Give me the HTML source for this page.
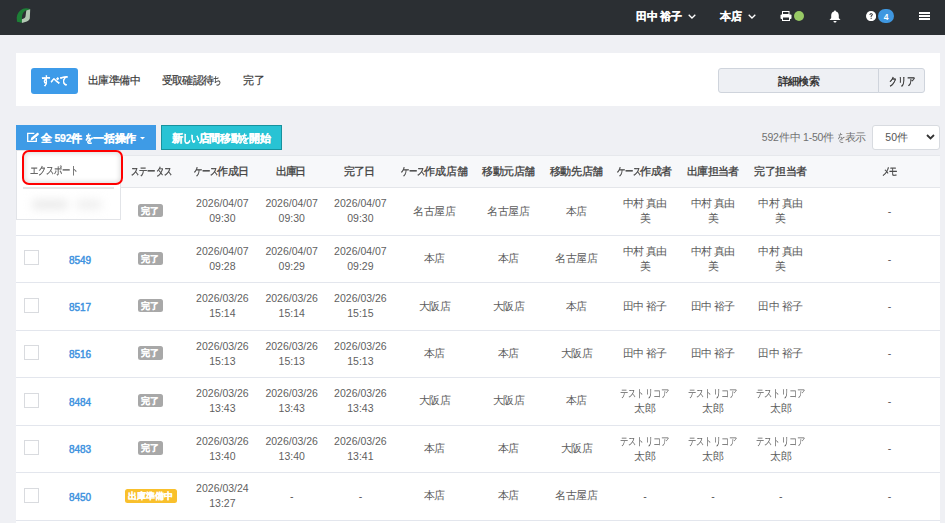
<!DOCTYPE html>
<html><head><meta charset="utf-8">
<style>
*{box-sizing:border-box;margin:0;padding:0}
html,body{width:945px;height:523px;overflow:hidden}
body{background:#eff0f4;font-family:"Liberation Sans",sans-serif;font-size:10.5px;color:#555;position:relative}
.abs{position:absolute}
.tx{position:absolute;white-space:nowrap;line-height:16px;height:16px}
.tn{-webkit-text-stroke:0.2px currentColor}
.tb{-webkit-text-stroke:0.2px currentColor}
.tid{-webkit-text-stroke:0.45px currentColor}
.k{display:inline-block;letter-spacing:0;white-space:nowrap}
.ki{display:inline-block;transform-origin:0 0;letter-spacing:0}
.card{position:absolute;background:#fff}
.row{position:absolute;left:16px;width:924px;border-bottom:1px solid #e3e6ed;background:#fff}
.cb{position:absolute;left:24px;width:14.6px;height:15px;border:1px solid #d9dbdf;background:#fff}
.bdg{position:absolute;background:#a8a8a8;border-radius:2.5px}
</style></head>
<body>
<div class="abs" style="left:0;top:0;width:945px;height:35px;background:#2b2f33"></div>
<svg class="abs" style="left:12px;top:4px" width="24" height="24" viewBox="0 0 24 24">
  <path d="M18.1 5.1 C16 4 13 3.8 11 4.8 C7.5 6.5 5 9.5 4.7 13.5 L5 17.8 L9.9 18.7 L9.9 13.4 C10 10.2 11.6 7.3 13.9 6.5 L18.1 5.4 Z" fill="#1d7f36"/>
  <path d="M14.3 6.4 L18.2 5.2 L17.8 14.6 C17.2 16.4 15.6 17.4 13.2 18.1 L9.9 18.9 L9.9 15.2 C11.6 14.6 13.2 13.9 13.5 12.4 Z" fill="#b3c9b4"/>
</svg>
<svg class="abs" style="left:688px;top:14px" width="8" height="5" viewBox="0 0 8 5"><path d="M0.7 0.7 L4 4 L7.3 0.7" stroke="#fff" stroke-width="1.3" fill="none"/></svg>
<svg class="abs" style="left:748px;top:14px" width="8" height="5" viewBox="0 0 8 5"><path d="M0.7 0.7 L4 4 L7.3 0.7" stroke="#fff" stroke-width="1.3" fill="none"/></svg>
<!-- printer -->
<svg class="abs" style="left:780px;top:11px" width="12" height="10" viewBox="0 0 12 10">
  <rect x="2.5" y="0.5" width="6.5" height="3" fill="none" stroke="#fff" stroke-width="1"/>
  <rect x="0.5" y="3.5" width="11" height="4.5" rx="1" fill="#fff"/>
  <rect x="2.5" y="6" width="7" height="3.5" fill="#2b2f33" stroke="#fff" stroke-width="1"/>
</svg>
<div class="abs" style="left:794.2px;top:10.8px;width:10.2px;height:10.2px;border-radius:50%;background:#97c965"></div>
<!-- bell -->
<svg class="abs" style="left:829px;top:10px" width="12" height="13" viewBox="0 0 12 13">
  <path d="M6 0.5 C6.6 0.5 7 1 7 1.5 C9 2 9.8 3.6 9.8 5.6 L9.8 8 L11.5 10 L0.5 10 L2.2 8 L2.2 5.6 C2.2 3.6 3 2 5 1.5 C5 1 5.4 0.5 6 0.5Z" fill="#fff"/>
  <path d="M4.5 11 L7.5 11 C7.5 12 6.8 12.6 6 12.6 C5.2 12.6 4.5 12 4.5 11Z" fill="#fff"/>
</svg>
<!-- question -->
<svg class="abs" style="left:866px;top:11px" width="10.2" height="10.2" viewBox="0 0 11 11">
  <circle cx="5.5" cy="5.5" r="5.5" fill="#fff"/>
  <path d="M3.7 4.2 C3.7 3 4.5 2.3 5.6 2.3 C6.7 2.3 7.4 3 7.4 3.9 C7.4 5 6.2 5.2 6 6.2 L6 6.6 L5 6.6 L5 6 C5.1 4.8 6.3 4.7 6.3 3.9 C6.3 3.5 6 3.2 5.6 3.2 C5.1 3.2 4.8 3.6 4.8 4.2Z" fill="#2b2f33"/>
  <rect x="5" y="7.3" width="1.1" height="1.2" fill="#2b2f33"/>
</svg>
<div class="abs" style="left:878px;top:9px;width:16px;height:14px;border-radius:7px;background:#3f97e0;color:#fff;font-weight:bold;font-size:8.5px;line-height:16px;text-align:center">4</div>
<!-- hamburger -->
<div class="abs" style="left:919px;top:12px;width:10.8px;height:1.9px;background:#fff"></div>
<div class="abs" style="left:919px;top:15.2px;width:10.8px;height:1.9px;background:#fff"></div>
<div class="abs" style="left:919px;top:18.4px;width:10.8px;height:1.9px;background:#fff"></div>

<!-- tabs card -->
<div class="card" style="left:16px;top:53px;width:924px;height:53px"></div>
<div class="abs" style="left:31px;top:68px;width:47px;height:26px;background:#3d9be9;border-radius:3px"></div>
<div class="abs" style="left:718px;top:68px;width:161px;height:25px;background:#eef0f4;border:1px solid #cfd4dc;border-radius:3px 0 0 3px"></div>
<div class="abs" style="left:878px;top:68px;width:47px;height:25px;background:#eef0f4;border:1px solid #cfd4dc;border-radius:0 3px 3px 0"></div>

<!-- action buttons -->
<div class="abs" style="left:16px;top:125px;width:140px;height:25px;background:#3e9be6"></div>
<svg class="abs" style="left:26px;top:132.2px" width="14" height="11" viewBox="0 0 14 11">
  <path d="M8.3 1.3 L1.7 1.3 L1.7 9.3 L10.3 9.3 L10.3 6" fill="none" stroke="#fff" stroke-width="1.3"/>
  <path d="M4.6 8.6 L5.2 5.8 L11 1.0 C11.5 0.6 12.1 0.7 12.5 1.2 L12.7 1.5 C13 2 12.9 2.6 12.5 3 L6.8 7.8 Z" fill="#fff"/>
</svg>
<svg class="abs" style="left:139.5px;top:137px" width="5" height="3" viewBox="0 0 5 3"><path d="M0 0 L5 0 L2.5 2.5Z" fill="#fff"/></svg>
<div class="abs" style="left:161px;top:125px;width:121px;height:25px;background:#28c3d4;border:1px solid #17929e"></div>

<div class="abs" style="left:871.5px;top:125px;width:68.5px;height:25px;background:#fff;border:1px solid #d8dbe0;border-radius:3px"></div>
<svg class="abs" style="left:926px;top:134px" width="9" height="6" viewBox="0 0 9 6"><path d="M1 1 L4.5 4.5 L8 1" stroke="#333" stroke-width="1.8" fill="none"/></svg>

<!-- table -->
<div class="card" style="left:16px;top:155px;width:924px;height:368px"></div>
<div class="abs" style="left:16px;top:155px;width:924px;height:32.6px;background:#f7f8fa;border-top:1px solid #e6e8ec;border-bottom:1px solid #e4e6ea"></div>
<div class="row" style="top:188.30px;height:47.48px"></div>
<div class="bdg" style="left:138px;width:25px;top:204.04px;height:13.2px"></div>
<div class="row" style="top:235.78px;height:47.48px"></div>
<div class="cb" style="top:250.12px"></div>
<div class="bdg" style="left:138px;width:25px;top:251.52px;height:13.2px"></div>
<div class="row" style="top:283.26px;height:47.48px"></div>
<div class="cb" style="top:297.60px"></div>
<div class="bdg" style="left:138px;width:25px;top:299.00px;height:13.2px"></div>
<div class="row" style="top:330.74px;height:47.48px"></div>
<div class="cb" style="top:345.08px"></div>
<div class="bdg" style="left:138px;width:25px;top:346.48px;height:13.2px"></div>
<div class="row" style="top:378.22px;height:47.48px"></div>
<div class="cb" style="top:392.56px"></div>
<div class="bdg" style="left:138px;width:25px;top:393.96px;height:13.2px"></div>
<div class="row" style="top:425.70px;height:47.48px"></div>
<div class="cb" style="top:440.04px"></div>
<div class="bdg" style="left:138px;width:25px;top:441.44px;height:13.2px"></div>
<div class="row" style="top:473.18px;height:47.48px"></div>
<div class="cb" style="top:487.52px"></div>
<div class="bdg" style="left:125px;width:52px;top:489.32px;height:14px;background:#f9c02c"></div>

<!-- dropdown -->
<div class="abs" style="left:16px;top:150px;width:105px;height:70px;background:#fff;border:1px solid #e2e4e8"></div>
<div class="abs" style="left:23px;top:187px;width:91px;height:2px;background:#e6e6e6"></div>
<div class="abs" style="left:20px;top:190px;width:96px;height:30px;filter:blur(5px)">
  <div style="position:absolute;left:12px;top:10px;width:36px;height:9px;background:#e9e9e9;border-radius:4px"></div>
  <div style="position:absolute;left:56px;top:10px;width:26px;height:9px;background:#eeeeee;border-radius:4px"></div>
</div>
<div class="abs" style="left:22px;top:150px;width:101px;height:35px;border:2px solid #f00;border-radius:7px;box-shadow:inset 0 0 5px 1px rgba(0,0,0,0.15);background:#fff"></div>
<div class="tx tb" style="left:636.10px;top:8.30px;font-size:10.5px;font-weight:bold;color:#fff;letter-spacing:-0.31px;">田中 裕子</div>
<div class="tx tb" style="left:720.40px;top:8.30px;font-size:10.5px;font-weight:bold;color:#fff;letter-spacing:-0.70px;">本店</div>
<div class="tx tb" style="left:41.50px;top:72.00px;font-size:10.5px;font-weight:bold;color:#fff;letter-spacing:0.45px;"><span class="k" style="width:25.29px"><span class="ki" style="transform:scaleX(0.76);letter-spacing:0.59px">すべて</span></span></div>
<div class="tx tn" style="left:88.00px;top:72.00px;font-size:10.5px;font-weight:normal;color:#3a3a3a;letter-spacing:-0.62px;">出庫準備中</div>
<div class="tx tn" style="left:161.50px;top:72.00px;font-size:10.5px;font-weight:normal;color:#3a3a3a;letter-spacing:-0.65px;">受取確認待<span class="k" style="width:7.33px"><span class="ki" style="transform:scaleX(0.76);letter-spacing:-0.85px">ち</span></span></div>
<div class="tx tn" style="left:243.00px;top:72.00px;font-size:10.5px;font-weight:normal;color:#3a3a3a;letter-spacing:-0.50px;">完了</div>
<div class="tx tn" style="left:777.50px;top:73.00px;font-size:10.5px;font-weight:normal;color:#2a2a2a;letter-spacing:-0.53px;-webkit-text-stroke:0.35px #2a2a2a;">詳細検索</div>
<div class="tx tn" style="left:888.50px;top:73.00px;font-size:10.5px;font-weight:normal;color:#2a2a2a;letter-spacing:0.40px;-webkit-text-stroke:0.35px #2a2a2a;"><span class="k" style="width:25.14px"><span class="ki" style="transform:scaleX(0.76);letter-spacing:0.53px">クリア</span></span></div>
<div class="tx tb" style="left:40.80px;top:129.60px;font-size:10.5px;font-weight:bold;color:#fff;letter-spacing:-0.16px;">全 592件 <span class="k" style="width:7.82px"><span class="ki" style="transform:scaleX(0.76);letter-spacing:-0.21px">を</span></span>一括操作</div>
<div class="tx tb" style="left:172.40px;top:130.20px;font-size:10.5px;font-weight:bold;color:#fff;letter-spacing:-0.27px;">新<span class="k" style="width:15.42px"><span class="ki" style="transform:scaleX(0.76);letter-spacing:-0.35px">しい</span></span>店間移動<span class="k" style="width:7.71px"><span class="ki" style="transform:scaleX(0.76);letter-spacing:-0.35px">を</span></span>開始</div>
<div class="tx tn" style="left:761.80px;top:128.70px;font-size:10.5px;font-weight:normal;color:#707070;letter-spacing:-0.20px;-webkit-text-stroke:0px;">592件中 1-50件 <span class="k" style="width:7.78px"><span class="ki" style="transform:scaleX(0.76);letter-spacing:-0.27px">を</span></span>表示</div>
<div class="tx tn" style="left:885.30px;top:129.00px;font-size:10.5px;font-weight:normal;color:#555;letter-spacing:0.01px;-webkit-text-stroke:0px;">50件</div>
<div class="tx tn" style="left:130.50px;top:162.50px;font-size:10.5px;font-weight:normal;color:#404040;letter-spacing:-0.19px;-webkit-text-stroke:0.3px #404040;"><span class="k" style="width:38.96px"><span class="ki" style="transform:scaleX(0.76);letter-spacing:-0.25px">ステータス</span></span></div>
<div class="tx tn" style="left:194.20px;top:162.50px;font-size:10.5px;font-weight:normal;color:#404040;letter-spacing:-0.35px;-webkit-text-stroke:0.3px #404040;"><span class="k" style="width:22.90px"><span class="ki" style="transform:scaleX(0.76);letter-spacing:-0.46px">ケース</span></span>作成日</div>
<div class="tx tn" style="left:275.90px;top:162.50px;font-size:10.5px;font-weight:normal;color:#404040;letter-spacing:-1.20px;-webkit-text-stroke:0.3px #404040;">出庫日</div>
<div class="tx tn" style="left:344.10px;top:162.50px;font-size:10.5px;font-weight:normal;color:#404040;letter-spacing:-0.90px;-webkit-text-stroke:0.3px #404040;">完了日</div>
<div class="tx tn" style="left:401.10px;top:162.50px;font-size:10.5px;font-weight:normal;color:#404040;letter-spacing:-0.24px;-webkit-text-stroke:0.3px #404040;"><span class="k" style="width:23.22px"><span class="ki" style="transform:scaleX(0.76);letter-spacing:-0.32px">ケース</span></span>作成店舗</div>
<div class="tx tn" style="left:482.40px;top:162.50px;font-size:10.5px;font-weight:normal;color:#404040;letter-spacing:-0.50px;-webkit-text-stroke:0.3px #404040;">移動元店舗</div>
<div class="tx tn" style="left:549.70px;top:162.50px;font-size:10.5px;font-weight:normal;color:#404040;letter-spacing:-0.38px;-webkit-text-stroke:0.3px #404040;">移動先店舗</div>
<div class="tx tn" style="left:617.10px;top:162.50px;font-size:10.5px;font-weight:normal;color:#404040;letter-spacing:-0.35px;-webkit-text-stroke:0.3px #404040;"><span class="k" style="width:22.90px"><span class="ki" style="transform:scaleX(0.76);letter-spacing:-0.46px">ケース</span></span>作成者</div>
<div class="tx tn" style="left:686.90px;top:162.50px;font-size:10.5px;font-weight:normal;color:#404040;letter-spacing:-0.65px;-webkit-text-stroke:0.3px #404040;">出庫担当者</div>
<div class="tx tn" style="left:754.30px;top:162.50px;font-size:10.5px;font-weight:normal;color:#404040;letter-spacing:-0.55px;-webkit-text-stroke:0.3px #404040;">完了担当者</div>
<div class="tx tn" style="left:881.50px;top:162.50px;font-size:10.5px;font-weight:normal;color:#404040;letter-spacing:-1.21px;-webkit-text-stroke:0.3px #404040;"><span class="k" style="width:13.53px"><span class="ki" style="transform:scaleX(0.76);letter-spacing:-1.60px">メモ</span></span></div>
<div class="tx tn" style="left:30.00px;top:162.00px;font-size:10.5px;font-weight:normal;color:#555;letter-spacing:-0.33px;"><span class="k" style="width:45.92px"><span class="ki" style="transform:scaleX(0.76);letter-spacing:-0.43px">エクスポート</span></span></div>
<div class="tx tb" style="left:141.40px;top:203.04px;font-size:8.8px;font-weight:bold;color:#fff;letter-spacing:0.10px;">完了</div>
<div class="tx" style="left:162.40px;width:120px;text-align:center;top:195.34px;font-size:10.5px;font-weight:normal;color:#5f5f5f">2026/04/07</div>
<div class="tx" style="left:162.40px;width:120px;text-align:center;top:210.34px;font-size:10.5px;font-weight:normal;color:#5f5f5f">09:30</div>
<div class="tx" style="left:231.70px;width:120px;text-align:center;top:195.34px;font-size:10.5px;font-weight:normal;color:#5f5f5f">2026/04/07</div>
<div class="tx" style="left:231.70px;width:120px;text-align:center;top:210.34px;font-size:10.5px;font-weight:normal;color:#5f5f5f">09:30</div>
<div class="tx" style="left:300.40px;width:120px;text-align:center;top:195.34px;font-size:10.5px;font-weight:normal;color:#5f5f5f">2026/04/07</div>
<div class="tx" style="left:300.40px;width:120px;text-align:center;top:210.34px;font-size:10.5px;font-weight:normal;color:#5f5f5f">09:30</div>
<div class="tx" style="left:413.25px;top:202.54px;font-size:10.5px;font-weight:normal;color:#5c5c5c;letter-spacing:-0.50px;">名古屋店</div>
<div class="tx" style="left:487.45px;top:202.54px;font-size:10.5px;font-weight:normal;color:#5c5c5c;letter-spacing:-0.50px;">名古屋店</div>
<div class="tx" style="left:565.75px;top:202.54px;font-size:10.5px;font-weight:normal;color:#5c5c5c;letter-spacing:-0.50px;">本店</div>
<div class="tx" style="left:622.50px;top:195.34px;font-size:10.5px;font-weight:normal;color:#5c5c5c;letter-spacing:-0.48px;">中村 真由</div>
<div class="tx" style="left:639.50px;top:210.34px;font-size:10.5px;font-weight:normal;color:#5c5c5c;letter-spacing:0.00px;">美</div>
<div class="tx" style="left:690.50px;top:195.34px;font-size:10.5px;font-weight:normal;color:#5c5c5c;letter-spacing:-0.48px;">中村 真由</div>
<div class="tx" style="left:707.50px;top:210.34px;font-size:10.5px;font-weight:normal;color:#5c5c5c;letter-spacing:0.00px;">美</div>
<div class="tx" style="left:758.30px;top:195.34px;font-size:10.5px;font-weight:normal;color:#5c5c5c;letter-spacing:-0.48px;">中村 真由</div>
<div class="tx" style="left:775.30px;top:210.34px;font-size:10.5px;font-weight:normal;color:#5c5c5c;letter-spacing:0.00px;">美</div>
<div class="tx" style="left:829.50px;width:120px;text-align:center;top:203.04px;font-size:10.5px;font-weight:normal;color:#555">-</div>
<div class="tx tid" style="left:20.00px;width:120px;text-align:center;top:252.52px;font-size:10px;font-weight:normal;color:#3f93e0">8549</div>
<div class="tx tb" style="left:141.40px;top:250.52px;font-size:8.8px;font-weight:bold;color:#fff;letter-spacing:0.10px;">完了</div>
<div class="tx" style="left:162.40px;width:120px;text-align:center;top:242.82px;font-size:10.5px;font-weight:normal;color:#5f5f5f">2026/04/07</div>
<div class="tx" style="left:162.40px;width:120px;text-align:center;top:257.82px;font-size:10.5px;font-weight:normal;color:#5f5f5f">09:28</div>
<div class="tx" style="left:231.70px;width:120px;text-align:center;top:242.82px;font-size:10.5px;font-weight:normal;color:#5f5f5f">2026/04/07</div>
<div class="tx" style="left:231.70px;width:120px;text-align:center;top:257.82px;font-size:10.5px;font-weight:normal;color:#5f5f5f">09:29</div>
<div class="tx" style="left:300.40px;width:120px;text-align:center;top:242.82px;font-size:10.5px;font-weight:normal;color:#5f5f5f">2026/04/07</div>
<div class="tx" style="left:300.40px;width:120px;text-align:center;top:257.82px;font-size:10.5px;font-weight:normal;color:#5f5f5f">09:29</div>
<div class="tx" style="left:423.75px;top:250.02px;font-size:10.5px;font-weight:normal;color:#5c5c5c;letter-spacing:-0.50px;">本店</div>
<div class="tx" style="left:497.95px;top:250.02px;font-size:10.5px;font-weight:normal;color:#5c5c5c;letter-spacing:-0.50px;">本店</div>
<div class="tx" style="left:555.25px;top:250.02px;font-size:10.5px;font-weight:normal;color:#5c5c5c;letter-spacing:-0.50px;">名古屋店</div>
<div class="tx" style="left:622.50px;top:242.82px;font-size:10.5px;font-weight:normal;color:#5c5c5c;letter-spacing:-0.48px;">中村 真由</div>
<div class="tx" style="left:639.50px;top:257.82px;font-size:10.5px;font-weight:normal;color:#5c5c5c;letter-spacing:0.00px;">美</div>
<div class="tx" style="left:690.50px;top:242.82px;font-size:10.5px;font-weight:normal;color:#5c5c5c;letter-spacing:-0.48px;">中村 真由</div>
<div class="tx" style="left:707.50px;top:257.82px;font-size:10.5px;font-weight:normal;color:#5c5c5c;letter-spacing:0.00px;">美</div>
<div class="tx" style="left:758.30px;top:242.82px;font-size:10.5px;font-weight:normal;color:#5c5c5c;letter-spacing:-0.48px;">中村 真由</div>
<div class="tx" style="left:775.30px;top:257.82px;font-size:10.5px;font-weight:normal;color:#5c5c5c;letter-spacing:0.00px;">美</div>
<div class="tx" style="left:829.50px;width:120px;text-align:center;top:250.52px;font-size:10.5px;font-weight:normal;color:#555">-</div>
<div class="tx tid" style="left:20.00px;width:120px;text-align:center;top:300.00px;font-size:10px;font-weight:normal;color:#3f93e0">8517</div>
<div class="tx tb" style="left:141.40px;top:298.00px;font-size:8.8px;font-weight:bold;color:#fff;letter-spacing:0.10px;">完了</div>
<div class="tx" style="left:162.40px;width:120px;text-align:center;top:290.30px;font-size:10.5px;font-weight:normal;color:#5f5f5f">2026/03/26</div>
<div class="tx" style="left:162.40px;width:120px;text-align:center;top:305.30px;font-size:10.5px;font-weight:normal;color:#5f5f5f">15:14</div>
<div class="tx" style="left:231.70px;width:120px;text-align:center;top:290.30px;font-size:10.5px;font-weight:normal;color:#5f5f5f">2026/03/26</div>
<div class="tx" style="left:231.70px;width:120px;text-align:center;top:305.30px;font-size:10.5px;font-weight:normal;color:#5f5f5f">15:14</div>
<div class="tx" style="left:300.40px;width:120px;text-align:center;top:290.30px;font-size:10.5px;font-weight:normal;color:#5f5f5f">2026/03/26</div>
<div class="tx" style="left:300.40px;width:120px;text-align:center;top:305.30px;font-size:10.5px;font-weight:normal;color:#5f5f5f">15:15</div>
<div class="tx" style="left:418.50px;top:297.50px;font-size:10.5px;font-weight:normal;color:#5c5c5c;letter-spacing:-0.50px;">大阪店</div>
<div class="tx" style="left:492.70px;top:297.50px;font-size:10.5px;font-weight:normal;color:#5c5c5c;letter-spacing:-0.50px;">大阪店</div>
<div class="tx" style="left:565.75px;top:297.50px;font-size:10.5px;font-weight:normal;color:#5c5c5c;letter-spacing:-0.50px;">本店</div>
<div class="tx" style="left:622.50px;top:297.50px;font-size:10.5px;font-weight:normal;color:#5c5c5c;letter-spacing:-0.48px;">田中 裕子</div>
<div class="tx" style="left:690.50px;top:297.50px;font-size:10.5px;font-weight:normal;color:#5c5c5c;letter-spacing:-0.48px;">田中 裕子</div>
<div class="tx" style="left:758.30px;top:297.50px;font-size:10.5px;font-weight:normal;color:#5c5c5c;letter-spacing:-0.48px;">田中 裕子</div>
<div class="tx" style="left:829.50px;width:120px;text-align:center;top:298.00px;font-size:10.5px;font-weight:normal;color:#555">-</div>
<div class="tx tid" style="left:20.00px;width:120px;text-align:center;top:347.48px;font-size:10px;font-weight:normal;color:#3f93e0">8516</div>
<div class="tx tb" style="left:141.40px;top:345.48px;font-size:8.8px;font-weight:bold;color:#fff;letter-spacing:0.10px;">完了</div>
<div class="tx" style="left:162.40px;width:120px;text-align:center;top:337.78px;font-size:10.5px;font-weight:normal;color:#5f5f5f">2026/03/26</div>
<div class="tx" style="left:162.40px;width:120px;text-align:center;top:352.78px;font-size:10.5px;font-weight:normal;color:#5f5f5f">15:13</div>
<div class="tx" style="left:231.70px;width:120px;text-align:center;top:337.78px;font-size:10.5px;font-weight:normal;color:#5f5f5f">2026/03/26</div>
<div class="tx" style="left:231.70px;width:120px;text-align:center;top:352.78px;font-size:10.5px;font-weight:normal;color:#5f5f5f">15:13</div>
<div class="tx" style="left:300.40px;width:120px;text-align:center;top:337.78px;font-size:10.5px;font-weight:normal;color:#5f5f5f">2026/03/26</div>
<div class="tx" style="left:300.40px;width:120px;text-align:center;top:352.78px;font-size:10.5px;font-weight:normal;color:#5f5f5f">15:13</div>
<div class="tx" style="left:423.75px;top:344.98px;font-size:10.5px;font-weight:normal;color:#5c5c5c;letter-spacing:-0.50px;">本店</div>
<div class="tx" style="left:497.95px;top:344.98px;font-size:10.5px;font-weight:normal;color:#5c5c5c;letter-spacing:-0.50px;">本店</div>
<div class="tx" style="left:560.50px;top:344.98px;font-size:10.5px;font-weight:normal;color:#5c5c5c;letter-spacing:-0.50px;">大阪店</div>
<div class="tx" style="left:622.50px;top:344.98px;font-size:10.5px;font-weight:normal;color:#5c5c5c;letter-spacing:-0.48px;">田中 裕子</div>
<div class="tx" style="left:690.50px;top:344.98px;font-size:10.5px;font-weight:normal;color:#5c5c5c;letter-spacing:-0.48px;">田中 裕子</div>
<div class="tx" style="left:758.30px;top:344.98px;font-size:10.5px;font-weight:normal;color:#5c5c5c;letter-spacing:-0.48px;">田中 裕子</div>
<div class="tx" style="left:829.50px;width:120px;text-align:center;top:345.48px;font-size:10.5px;font-weight:normal;color:#555">-</div>
<div class="tx tid" style="left:20.00px;width:120px;text-align:center;top:394.96px;font-size:10px;font-weight:normal;color:#3f93e0">8484</div>
<div class="tx tb" style="left:141.40px;top:392.96px;font-size:8.8px;font-weight:bold;color:#fff;letter-spacing:0.10px;">完了</div>
<div class="tx" style="left:162.40px;width:120px;text-align:center;top:385.26px;font-size:10.5px;font-weight:normal;color:#5f5f5f">2026/03/26</div>
<div class="tx" style="left:162.40px;width:120px;text-align:center;top:400.26px;font-size:10.5px;font-weight:normal;color:#5f5f5f">13:43</div>
<div class="tx" style="left:231.70px;width:120px;text-align:center;top:385.26px;font-size:10.5px;font-weight:normal;color:#5f5f5f">2026/03/26</div>
<div class="tx" style="left:231.70px;width:120px;text-align:center;top:400.26px;font-size:10.5px;font-weight:normal;color:#5f5f5f">13:43</div>
<div class="tx" style="left:300.40px;width:120px;text-align:center;top:385.26px;font-size:10.5px;font-weight:normal;color:#5f5f5f">2026/03/26</div>
<div class="tx" style="left:300.40px;width:120px;text-align:center;top:400.26px;font-size:10.5px;font-weight:normal;color:#5f5f5f">13:43</div>
<div class="tx" style="left:418.50px;top:392.46px;font-size:10.5px;font-weight:normal;color:#5c5c5c;letter-spacing:-0.50px;">大阪店</div>
<div class="tx" style="left:492.70px;top:392.46px;font-size:10.5px;font-weight:normal;color:#5c5c5c;letter-spacing:-0.50px;">大阪店</div>
<div class="tx" style="left:565.75px;top:392.46px;font-size:10.5px;font-weight:normal;color:#5c5c5c;letter-spacing:-0.50px;">本店</div>
<div class="tx" style="left:620.00px;top:385.26px;font-size:10.5px;font-weight:normal;color:#5c5c5c;letter-spacing:-0.34px;"><span class="k" style="width:22.91px"><span class="ki" style="transform:scaleX(0.76);letter-spacing:-0.45px">テスト</span></span> <span class="k" style="width:22.91px"><span class="ki" style="transform:scaleX(0.76);letter-spacing:-0.45px">リコア</span></span></div>
<div class="tx" style="left:634.15px;top:400.26px;font-size:10.5px;font-weight:normal;color:#5c5c5c;letter-spacing:-0.30px;">太郎</div>
<div class="tx" style="left:688.00px;top:385.26px;font-size:10.5px;font-weight:normal;color:#5c5c5c;letter-spacing:-0.34px;"><span class="k" style="width:22.91px"><span class="ki" style="transform:scaleX(0.76);letter-spacing:-0.45px">テスト</span></span> <span class="k" style="width:22.91px"><span class="ki" style="transform:scaleX(0.76);letter-spacing:-0.45px">リコア</span></span></div>
<div class="tx" style="left:702.15px;top:400.26px;font-size:10.5px;font-weight:normal;color:#5c5c5c;letter-spacing:-0.30px;">太郎</div>
<div class="tx" style="left:755.80px;top:385.26px;font-size:10.5px;font-weight:normal;color:#5c5c5c;letter-spacing:-0.34px;"><span class="k" style="width:22.91px"><span class="ki" style="transform:scaleX(0.76);letter-spacing:-0.45px">テスト</span></span> <span class="k" style="width:22.91px"><span class="ki" style="transform:scaleX(0.76);letter-spacing:-0.45px">リコア</span></span></div>
<div class="tx" style="left:769.95px;top:400.26px;font-size:10.5px;font-weight:normal;color:#5c5c5c;letter-spacing:-0.30px;">太郎</div>
<div class="tx" style="left:829.50px;width:120px;text-align:center;top:392.96px;font-size:10.5px;font-weight:normal;color:#555">-</div>
<div class="tx tid" style="left:20.00px;width:120px;text-align:center;top:442.44px;font-size:10px;font-weight:normal;color:#3f93e0">8483</div>
<div class="tx tb" style="left:141.40px;top:440.44px;font-size:8.8px;font-weight:bold;color:#fff;letter-spacing:0.10px;">完了</div>
<div class="tx" style="left:162.40px;width:120px;text-align:center;top:432.74px;font-size:10.5px;font-weight:normal;color:#5f5f5f">2026/03/26</div>
<div class="tx" style="left:162.40px;width:120px;text-align:center;top:447.74px;font-size:10.5px;font-weight:normal;color:#5f5f5f">13:40</div>
<div class="tx" style="left:231.70px;width:120px;text-align:center;top:432.74px;font-size:10.5px;font-weight:normal;color:#5f5f5f">2026/03/26</div>
<div class="tx" style="left:231.70px;width:120px;text-align:center;top:447.74px;font-size:10.5px;font-weight:normal;color:#5f5f5f">13:40</div>
<div class="tx" style="left:300.40px;width:120px;text-align:center;top:432.74px;font-size:10.5px;font-weight:normal;color:#5f5f5f">2026/03/26</div>
<div class="tx" style="left:300.40px;width:120px;text-align:center;top:447.74px;font-size:10.5px;font-weight:normal;color:#5f5f5f">13:41</div>
<div class="tx" style="left:423.75px;top:439.94px;font-size:10.5px;font-weight:normal;color:#5c5c5c;letter-spacing:-0.50px;">本店</div>
<div class="tx" style="left:497.95px;top:439.94px;font-size:10.5px;font-weight:normal;color:#5c5c5c;letter-spacing:-0.50px;">本店</div>
<div class="tx" style="left:560.50px;top:439.94px;font-size:10.5px;font-weight:normal;color:#5c5c5c;letter-spacing:-0.50px;">大阪店</div>
<div class="tx" style="left:620.00px;top:432.74px;font-size:10.5px;font-weight:normal;color:#5c5c5c;letter-spacing:-0.34px;"><span class="k" style="width:22.91px"><span class="ki" style="transform:scaleX(0.76);letter-spacing:-0.45px">テスト</span></span> <span class="k" style="width:22.91px"><span class="ki" style="transform:scaleX(0.76);letter-spacing:-0.45px">リコア</span></span></div>
<div class="tx" style="left:634.15px;top:447.74px;font-size:10.5px;font-weight:normal;color:#5c5c5c;letter-spacing:-0.30px;">太郎</div>
<div class="tx" style="left:688.00px;top:432.74px;font-size:10.5px;font-weight:normal;color:#5c5c5c;letter-spacing:-0.34px;"><span class="k" style="width:22.91px"><span class="ki" style="transform:scaleX(0.76);letter-spacing:-0.45px">テスト</span></span> <span class="k" style="width:22.91px"><span class="ki" style="transform:scaleX(0.76);letter-spacing:-0.45px">リコア</span></span></div>
<div class="tx" style="left:702.15px;top:447.74px;font-size:10.5px;font-weight:normal;color:#5c5c5c;letter-spacing:-0.30px;">太郎</div>
<div class="tx" style="left:755.80px;top:432.74px;font-size:10.5px;font-weight:normal;color:#5c5c5c;letter-spacing:-0.34px;"><span class="k" style="width:22.91px"><span class="ki" style="transform:scaleX(0.76);letter-spacing:-0.45px">テスト</span></span> <span class="k" style="width:22.91px"><span class="ki" style="transform:scaleX(0.76);letter-spacing:-0.45px">リコア</span></span></div>
<div class="tx" style="left:769.95px;top:447.74px;font-size:10.5px;font-weight:normal;color:#5c5c5c;letter-spacing:-0.30px;">太郎</div>
<div class="tx" style="left:829.50px;width:120px;text-align:center;top:440.44px;font-size:10.5px;font-weight:normal;color:#555">-</div>
<div class="tx tid" style="left:20.00px;width:120px;text-align:center;top:489.92px;font-size:10px;font-weight:normal;color:#3f93e0">8450</div>
<div class="tx tb" style="left:128.30px;top:488.42px;font-size:8.8px;font-weight:bold;color:#fff;letter-spacing:-0.08px;">出庫準備中</div>
<div class="tx" style="left:162.40px;width:120px;text-align:center;top:480.22px;font-size:10.5px;font-weight:normal;color:#5f5f5f">2026/03/24</div>
<div class="tx" style="left:162.40px;width:120px;text-align:center;top:495.22px;font-size:10.5px;font-weight:normal;color:#5f5f5f">13:27</div>
<div class="tx" style="left:231.70px;width:120px;text-align:center;top:487.92px;font-size:10.5px;font-weight:normal;color:#555">-</div>
<div class="tx" style="left:300.40px;width:120px;text-align:center;top:487.92px;font-size:10.5px;font-weight:normal;color:#555">-</div>
<div class="tx" style="left:423.75px;top:487.42px;font-size:10.5px;font-weight:normal;color:#5c5c5c;letter-spacing:-0.50px;">本店</div>
<div class="tx" style="left:497.95px;top:487.42px;font-size:10.5px;font-weight:normal;color:#5c5c5c;letter-spacing:-0.50px;">本店</div>
<div class="tx" style="left:555.25px;top:487.42px;font-size:10.5px;font-weight:normal;color:#5c5c5c;letter-spacing:-0.50px;">名古屋店</div>
<div class="tx" style="left:585.00px;width:120px;text-align:center;top:487.92px;font-size:10.5px;font-weight:normal;color:#555">-</div>
<div class="tx" style="left:653.00px;width:120px;text-align:center;top:487.92px;font-size:10.5px;font-weight:normal;color:#555">-</div>
<div class="tx" style="left:720.80px;width:120px;text-align:center;top:487.92px;font-size:10.5px;font-weight:normal;color:#555">-</div>
<div class="tx" style="left:829.50px;width:120px;text-align:center;top:487.92px;font-size:10.5px;font-weight:normal;color:#555">-</div>
</body></html>
